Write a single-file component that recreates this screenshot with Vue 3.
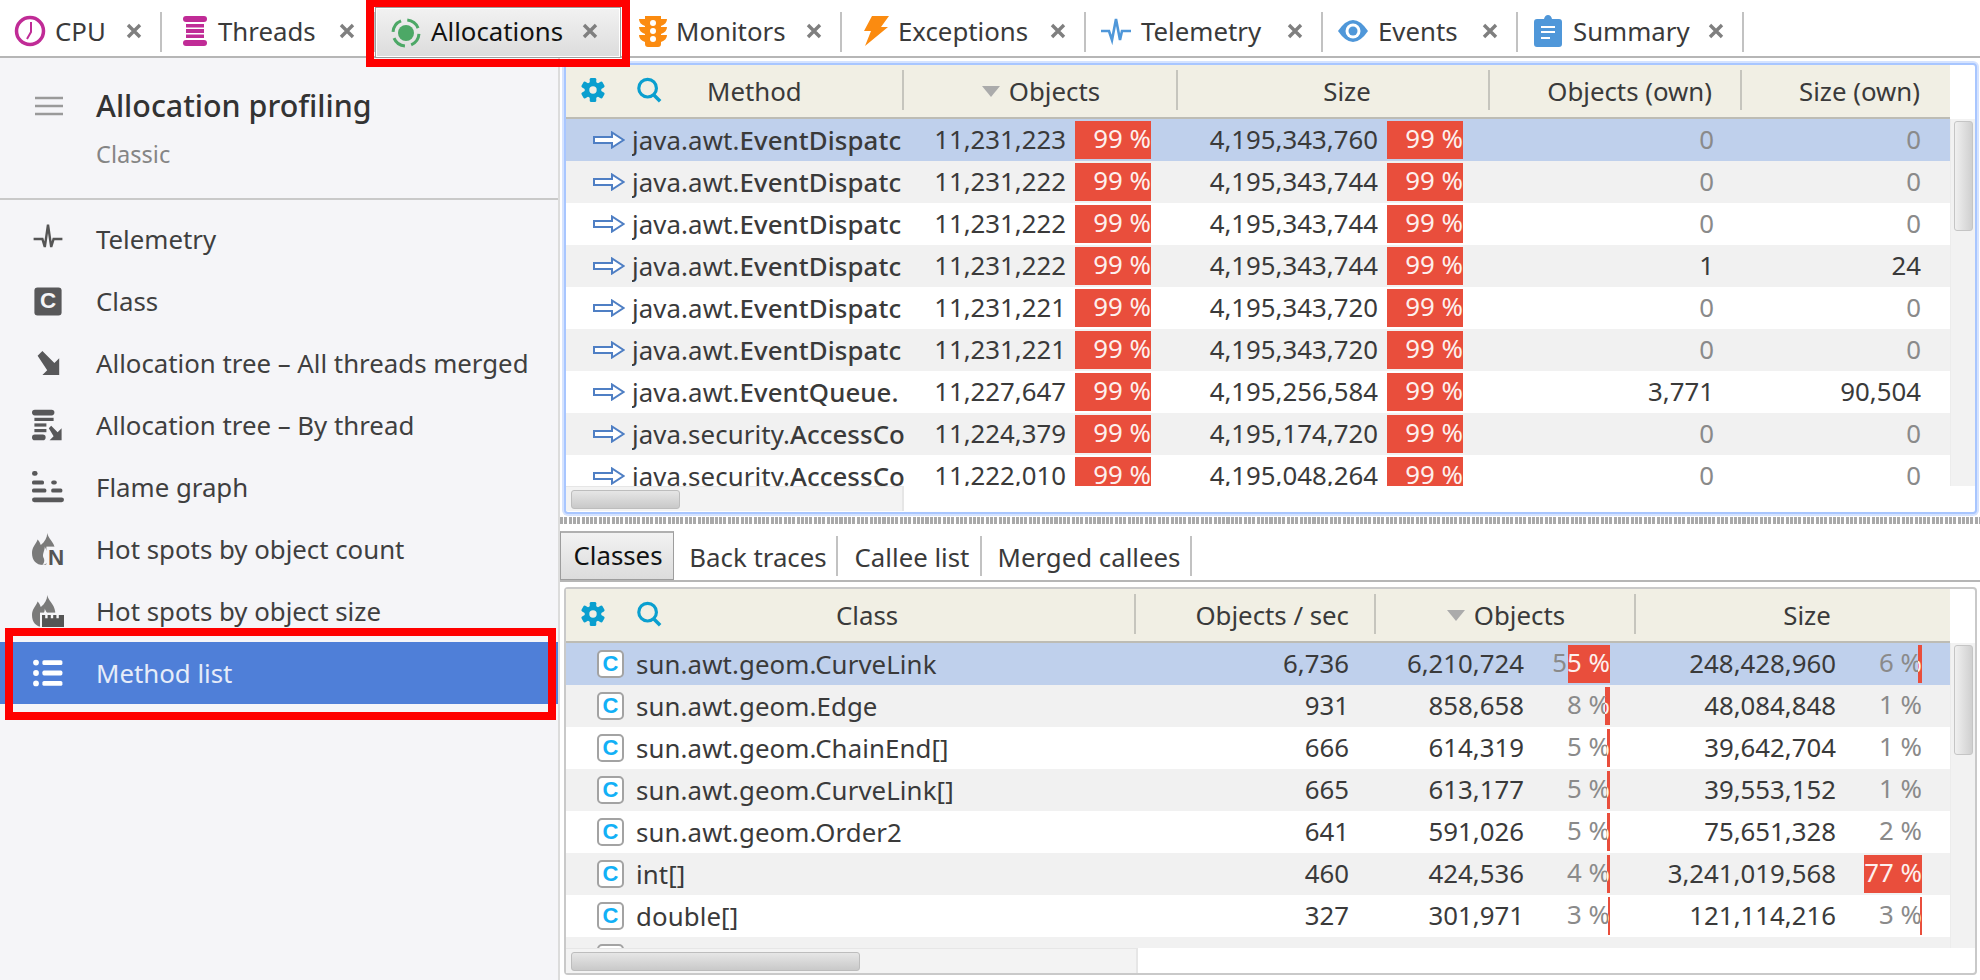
<script setup>
const tabs = [
  { id: 'cpu', label: 'CPU', w: 162 },
  { id: 'threads', label: 'Threads', w: 213 },
  { id: 'alloc', label: 'Allocations', w: 246, active: true },
  { id: 'mon', label: 'Monitors', w: 221 },
  { id: 'exc', label: 'Exceptions', w: 244 },
  { id: 'tel', label: 'Telemetry', w: 237 },
  { id: 'evt', label: 'Events', w: 195 },
  { id: 'sum', label: 'Summary', w: 226 }
]
const nav = [
  { id: 'tel', label: 'Telemetry' },
  { id: 'cls', label: 'Class' },
  { id: 'tree', label: 'Allocation tree – All threads merged' },
  { id: 'thr', label: 'Allocation tree – By thread' },
  { id: 'flame', label: 'Flame graph' },
  { id: 'hotn', label: 'Hot spots by object count' },
  { id: 'hots', label: 'Hot spots by object size' },
  { id: 'list', label: 'Method list', active: true }
]
const top = [
  ['java.awt.', 'EventDispatc', '11,231,223', '4,195,343,760', '0', '0'],
  ['java.awt.', 'EventDispatc', '11,231,222', '4,195,343,744', '0', '0'],
  ['java.awt.', 'EventDispatc', '11,231,222', '4,195,343,744', '0', '0'],
  ['java.awt.', 'EventDispatc', '11,231,222', '4,195,343,744', '1', '24'],
  ['java.awt.', 'EventDispatc', '11,231,221', '4,195,343,720', '0', '0'],
  ['java.awt.', 'EventDispatc', '11,231,221', '4,195,343,720', '0', '0'],
  ['java.awt.', 'EventQueue.', '11,227,647', '4,195,256,584', '3,771', '90,504'],
  ['java.security.', 'AccessCo', '11,224,379', '4,195,174,720', '0', '0'],
  ['java.security.', 'AccessCo', '11,222,010', '4,195,048,264', '0', '0']
]
const bottom = [
  ['sun.awt.geom.CurveLink', '6,736', '6,210,724', '55 %', 42, '248,428,960', '6 %', 4],
  ['sun.awt.geom.Edge', '931', '858,658', '8 %', 5, '48,084,848', '1 %', 0],
  ['sun.awt.geom.ChainEnd[]', '666', '614,319', '5 %', 3, '39,642,704', '1 %', 0],
  ['sun.awt.geom.CurveLink[]', '665', '613,177', '5 %', 3, '39,553,152', '1 %', 0],
  ['sun.awt.geom.Order2', '641', '591,026', '5 %', 3, '75,651,328', '2 %', 0],
  ['int[]', '460', '424,536', '4 %', 3, '3,241,019,568', '77 %', 58],
  ['double[]', '327', '301,971', '3 %', 2, '121,114,216', '3 %', 2],
  ['sun.awt.geom.Crossings', '230', '212,345', '2 %', 0, '8,493,800', '0 %', 0]
]
const subtabs = ['Classes', 'Back traces', 'Callee list', 'Merged callees']
</script>

<template>
  <div class="app">
    <header class="tabbar">
      <div v-for="t in tabs" :key="t.id" class="tab" :class="{ active: t.active }" :style="{ width: t.w + 'px' }">
        <svg class="tabicon" :class="'ti-' + t.id" viewBox="0 0 32 32">
          <template v-if="t.id === 'cpu'">
            <circle cx="16" cy="16" r="13.5" fill="none" stroke="#c02b96" stroke-width="3.5" />
            <path d="M17 7v10l-4 7" fill="none" stroke="#c02b96" stroke-width="2" />
          </template>
          <template v-else-if="t.id === 'threads'">
            <g fill="#c02b96">
              <rect x="4" y="1" width="24" height="6" rx="3" />
              <rect x="7" y="9" width="18" height="3.5" />
              <rect x="7" y="14" width="18" height="4" />
              <rect x="7" y="19.5" width="18" height="3.5" />
              <rect x="4" y="25" width="24" height="6" rx="3" />
            </g>
          </template>
          <template v-else-if="t.id === 'alloc'">
            <circle cx="16" cy="16" r="8" fill="#4ca866" />
            <circle cx="16" cy="16" r="13" fill="none" stroke="#4ca866" stroke-width="3" stroke-dasharray="14 6.4" stroke-dashoffset="-1" />
          </template>
          <template v-else-if="t.id === 'mon'">
            <path d="M8 1h16v3h6q0 5-6 7v1h6q0 5-6 7v1h6q0 5-6 7v2a3 3 0 0 1-3 3H11a3 3 0 0 1-3-3v-2q-6-2-6-7h6v-1q-6-2-6-7h6v-1Q2 9 2 4h6z" fill="#fb8b10" />
            <g fill="#fff"><circle cx="16" cy="8" r="3" /><circle cx="16" cy="16" r="3" /><circle cx="16" cy="24" r="3" /></g>
          </template>
          <template v-else-if="t.id === 'exc'">
            <path d="M12 1h17l-8 11h7L5 31l6-15H4z" fill="#fb8b10" />
          </template>
          <template v-else-if="t.id === 'tel'">
            <path d="M1 16h8l3 9 4-21 4 21 2-9h9" fill="none" stroke="#4f97d9" stroke-width="2.6" />
          </template>
          <template v-else-if="t.id === 'evt'">
            <path d="M1 16Q16-6 31 16 16 38 1 16z" fill="#4f97d9" />
            <circle cx="16" cy="16" r="7.5" fill="#fff" />
            <circle cx="16" cy="16" r="4.5" fill="#4f97d9" />
          </template>
          <template v-else>
            <path d="M5 4h7q1-4 4-4t4 4h7q3 0 3 3v22q0 3-3 3H5q-3 0-3-3V7q0-3 3-3z" fill="#4f97d9" />
            <g fill="#fff"><rect x="9" y="11" width="14" height="2" /><rect x="9" y="16" width="14" height="2" /><rect x="9" y="22" width="9" height="2" /></g>
          </template>
        </svg>
        <span class="tablabel">{{ t.label }}</span>
        <span class="tabclose"><svg viewBox="0 0 16 16"><path d="M2 2l12 12M14 2L2 14" stroke="#7f7f7f" stroke-width="3.4" /></svg></span>
      </div>
    </header>

    <div class="main">
      <aside class="sidebar">
        <div class="sidehead">
          <svg class="burger" viewBox="0 0 28 20"><path d="M0 2h28M0 10h28M0 18h28" stroke="#9a9a9a" stroke-width="2.6" /></svg>
          <div>
            <div class="title">Allocation profiling</div>
            <div class="subtitle">Classic</div>
          </div>
        </div>
        <nav class="nav">
          <div v-for="n in nav" :key="n.id" class="navitem" :class="{ active: n.active }">
            <svg class="navicon" viewBox="0 0 40 40">
              <path v-if="n.id === 'tel'" d="M2 20h11l3 10 4-28 4 28 3-10h11" fill="none" stroke="#555" stroke-width="3" />
              <template v-else-if="n.id === 'cls'">
                <rect x="3" y="3" width="34" height="35" rx="4" fill="#58585a" />
                <text x="20" y="29" text-anchor="middle" class="ctext">C</text>
              </template>
              <path v-else-if="n.id === 'tree'" d="M7 11l6-6 15 15 6-6v21H13l6-6z" fill="#58585a" />
              <template v-else-if="n.id === 'thr'">
                <g fill="#58585a">
                  <rect x="0" y="1" width="28" height="7" rx="3.5" />
                  <rect x="3" y="11" width="24" height="4" />
                  <rect x="3" y="18" width="15" height="4" />
                  <rect x="3" y="25" width="15" height="4" />
                  <rect x="0" y="32" width="17" height="7" rx="3.5" />
                  <path d="M21 24l3-3 8 8 5-5v15H22l5-5z" />
                </g>
              </template>
              <template v-else-if="n.id === 'flame'">
                <g fill="#58585a">
                  <rect x="0" y="0" width="7" height="6" rx="3" />
                  <rect x="0" y="12" width="15" height="5" rx="2" /><rect x="24" y="12" width="7" height="5" rx="2.5" />
                  <rect x="0" y="22" width="18" height="5" rx="2" /><rect x="24" y="22" width="14" height="5" rx="2" />
                  <rect x="0" y="33" width="40" height="6" rx="3" />
                </g>
              </template>
              <template v-else-if="n.id === 'hotn' || n.id === 'hots'">
                <path d="M19 0c1 7 9 11 10 21 1 11-6 19-15 19S0 34 0 25c0-8 5-11 7-17 2 2 3 4 4 7 5-4 8-9 8-15z" fill="#7a7a7a" />
                <path d="M16 17c1 4 5 7 5 13 0 5-3 10-8 10 3-3 3-7 1-10-1-4 2-8 2-13z" fill="#f5f5f8" />
                <template v-if="n.id === 'hotn'">
                  <rect x="18" y="17" width="22" height="23" fill="#f5f5f8" />
                  <text x="30" y="40" text-anchor="middle" class="ntext">N</text>
                </template>
                <template v-else>
                  <rect x="10" y="22" width="30" height="18" fill="#f5f5f8" />
                  <path d="M12.500 25h4v4h3v-4h4v4h3v-4h4v4h3v-4h6.500v15H12.500z" fill="#555" />
                </template>
              </template>
              <g v-else fill="#fff">
                <circle cx="5" cy="7" r="3.6" /><circle cx="5" cy="20" r="3.6" /><circle cx="5" cy="33" r="3.6" />
                <rect x="13" y="4" width="25" height="6" rx="2" /><rect x="13" y="17" width="25" height="6" rx="2" /><rect x="13" y="30" width="25" height="6" rx="2" />
              </g>
            </svg>
            <span>{{ n.label }}</span>
          </div>
        </nav>
      </aside>

      <section class="content">
        <div class="frame topframe focus">
          <div class="thead">
            <div class="hc tm method">
              <svg class="hicon" viewBox="0 0 28 28"><g fill="#0a9fcf"><rect x="10.5" y="1" width="7" height="26" rx="1.5" /><rect x="10.5" y="1" width="7" height="26" rx="1.5" transform="rotate(60 14 14)" /><rect x="10.5" y="1" width="7" height="26" rx="1.5" transform="rotate(120 14 14)" /><circle cx="14" cy="14" r="9" /></g><circle cx="14" cy="14" r="4" fill="#f1efe4" /></svg>
              <svg class="hicon search" viewBox="0 0 28 28"><circle cx="12.5" cy="12" r="9.5" fill="none" stroke="#0a9fcf" stroke-width="3.4" /><path d="M19 19l7 7" stroke="#0a9fcf" stroke-width="3.8" /></svg>
              <span class="hl hl-method">Method</span>
            </div>
            <div class="hc tn center"><i class="sort"></i>Objects</div>
            <div class="hc ts center sizeh">Size</div>
            <div class="hc to right">Objects (own)</div>
            <div class="hc tz right nosep">Size (own)</div>
          </div>
          <div class="tbody">
            <div class="rows">
              <div v-for="(r, i) in top" :key="i" class="row" :class="{ sel: i === 0 }">
                <div class="c tm name">
                  <svg class="arrow" viewBox="0 0 32 18"><path d="M1 6h18V1.500L30.500 9 19 16.500V12H1z" fill="#fff" stroke="#4f7fc4" stroke-width="2" /></svg>
                  <span class="clip">{{ r[0] }}<b>{{ r[1] }}</b></span>
                </div>
                <div class="c tn num">{{ r[2] }}<span class="pct"><span>99 %</span><span class="bar full"><span>99 %</span></span></span></div>
                <div class="c ts num">{{ r[3] }}<span class="pct"><span>99 %</span><span class="bar full"><span>99 %</span></span></span></div>
                <div class="c to num" :class="{ dim: r[4] === '0' }">{{ r[4] }}</div>
                <div class="c tz num" :class="{ dim: r[5] === '0' }">{{ r[5] }}</div>
              </div>
            </div>
            <div class="vscroll"><div class="vthumb"></div></div>
          </div>
          <div class="hscroll hs-top"><div class="hthumb ht-top"></div></div>
        </div>

        <div class="splitter"></div>

        <div class="subtabs">
          <div v-for="(s, i) in subtabs" :key="s" class="subtab" :class="['st' + i, { active: i === 0 }]">{{ s }}</div>
        </div>

        <div class="frame botframe">
          <div class="thead">
            <div class="hc bc method">
              <svg class="hicon" viewBox="0 0 28 28"><g fill="#0a9fcf"><rect x="10.5" y="1" width="7" height="26" rx="1.5" /><rect x="10.5" y="1" width="7" height="26" rx="1.5" transform="rotate(60 14 14)" /><rect x="10.5" y="1" width="7" height="26" rx="1.5" transform="rotate(120 14 14)" /><circle cx="14" cy="14" r="9" /></g><circle cx="14" cy="14" r="4" fill="#f1efe4" /></svg>
              <svg class="hicon search" viewBox="0 0 28 28"><circle cx="12.5" cy="12" r="9.5" fill="none" stroke="#0a9fcf" stroke-width="3.4" /><path d="M19 19l7 7" stroke="#0a9fcf" stroke-width="3.8" /></svg>
              <span class="hl hl-class">Class</span>
            </div>
            <div class="hc br right">Objects / sec</div>
            <div class="hc bn center"><i class="sort"></i>Objects</div>
            <div class="hc bs center nosep bsizeh">Size</div>
          </div>
          <div class="tbody">
            <div class="rows">
              <div v-for="(r, i) in bottom" :key="i" class="row" :class="{ sel: i === 0 }">
                <div class="c bc name">
                  <span class="cicon">C</span>
                  <span class="clip">{{ r[0] }}</span>
                </div>
                <div class="c br num">{{ r[1] }}</div>
                <div class="c bn num">{{ r[2] }}<span class="pct lite"><span>{{ r[3] }}</span><span v-if="r[4]" class="bar" :style="{ width: r[4] + 'px' }"><span>{{ r[3] }}</span></span></span></div>
                <div class="c bs num">{{ r[5] }}<span class="pct lite"><span>{{ r[6] }}</span><span v-if="r[7]" class="bar" :style="{ width: r[7] + 'px' }"><span>{{ r[6] }}</span></span></span></div>
              </div>
            </div>
            <div class="vscroll"><div class="vthumb vt-bot"></div></div>
          </div>
          <div class="hscroll hs-bot"><div class="hthumb ht-bot"></div></div>
        </div>
      </section>
    </div>

    <div class="mark mark-tab"></div>
    <div class="mark mark-nav"></div>
  </div>
</template>

<style>
html, body { margin: 0; padding: 0; background: #fff; }
</style>

<style scoped>
.app {
  position: relative;
  width: 1980px;
  height: 980px;
  overflow: hidden;
  background: #fff;
  color: #3a3a3a;
  font-family: "Noto Sans", "Open Sans", sans-serif;
  font-size: 25.8px;
  display: flex;
  flex-direction: column;
}
.tabbar {
  height: 56px;
  flex: none;
  display: flex;
  border-bottom: 2px solid #b6b6b6;
  box-sizing: content-box;
}
.tab {
  position: relative;
  box-sizing: border-box;
  height: 56px;
  display: flex;
  align-items: center;
  flex: none;
  padding-left: 14px;
  padding-top: 6px;
}
.tab::after {
  content: "";
  position: absolute;
  right: 0;
  top: 12px;
  width: 2px;
  height: 40px;
  background: #c2c2c2;
}
.tab.active::after { display: none; }
.tab.active {
  height: 51px;
  margin-top: 7px;
  padding-left: 14px;
  padding-top: 0;
  color: #111;
  background: linear-gradient(#f2f2f2, #dcdcdc);
  border: 1px solid #9d9d9d;
  box-shadow: inset 0 0 0 1px #fff;
}
.tab.active .tablabel { margin-top: -3px; }
.tabicon { width: 32px; height: 32px; flex: none; margin-right: 9px; }
.ti-threads { margin-left: 3px; margin-right: 7px; }
.ti-mon { margin-left: 2px; margin-right: 7px; }
.ti-exc { margin-left: 4px; margin-right: 6px; }
.tablabel { white-space: nowrap; }
.tabclose {
  position: absolute;
  right: 20px;
  top: 23px;
  width: 16px;
  height: 16px;
}
.tabclose svg { display: block; width: 16px; height: 16px; }
.tab.active .tabclose { right: 22px; top: 15px; }

.main { flex: 1; display: flex; min-height: 0; }
.sidebar {
  width: 558px;
  flex: none;
  background: #f5f5f8;
  border-right: 2px solid #dcdcdc;
}
.sidehead {
  height: 142px;
  box-sizing: border-box;
  display: flex;
  padding: 27px 0 0 35px;
  border-bottom: 2px solid #c9c9c9;
}
.burger { width: 28px; height: 20px; margin: 11px 33px 0 0; flex: none; }
.title { font-size: 30.4px; line-height: 42px; color: #333; font-weight: 500; }
.subtitle { font-size: 23.6px; line-height: 30px; margin-top: 12px; color: #858585; }
.nav { padding-top: 8px; }
.navitem {
  height: 62px;
  display: flex;
  align-items: center;
  padding-left: 32px;
  color: #3f3f3f;
}
.navicon { width: 32px; height: 32px; flex: none; margin-right: 32px; }
.navitem.active { background: #4f7fd8; color: #e6ecf8; }
.ctext { font: 700 28px "Liberation Sans", sans-serif; fill: #f5f5f8; }
.ntext { font: 700 28px "Liberation Sans", sans-serif; fill: #555; }

.content { flex: 1; min-width: 0; display: flex; flex-direction: column; }
.frame {
  box-sizing: border-box;
  margin-left: 4px;
  width: 1413px;
  display: flex;
  flex-direction: column;
  flex: none;
  border-radius: 4px;
  background: #fff;
}
.focus { border: 2px solid #a8c6ff; box-shadow: 0 0 0 2px #d5e3ff; }
.topframe { margin-top: 5px; height: 451px; padding: 0 0 1px 0; }
.botframe { height: 388px; border: 2px solid #c9c9c9; margin-top: 5px; }
.thead {
  display: flex;
  height: 54px;
  flex: none;
  box-sizing: border-box;
  background: #f1efe4;
  border-bottom: 2px solid #bdbcb4;
  width: 1384px;
}
.hc {
  position: relative;
  display: flex;
  align-items: center;
  box-sizing: border-box;
  flex: none;
}
.hc::after {
  content: "";
  position: absolute;
  right: 0;
  top: 5px;
  width: 2px;
  height: 40px;
  background: #c6c5bd;
}
.hc.nosep::after { display: none; }
.hc.center { justify-content: center; }
.hc.right { justify-content: flex-end; }
.hicon { width: 26px; height: 26px; position: absolute; left: 14px; top: 12px; }
.hicon.search { left: 70px; }
.hl-method { padding-left: 141px; }
.hl-class { padding-left: 270px; }
.sizeh { padding-left: 26px; }
.bsizeh { padding-left: 28px; }
.sort {
  width: 0;
  height: 0;
  border: 9px solid transparent;
  border-top: 11px solid #ababab;
  border-bottom: 0;
  margin-right: 9px;
}
.tm { width: 338px; }
.tn { width: 274px; }
.ts { width: 312px; }
.to { width: 252px; padding-right: 30px; }
.tz { width: 208px; padding-right: 30px; }
.bc { width: 570px; }
.br { width: 240px; padding-right: 27px; }
.bn { width: 260px; }
.bs { width: 314px; }
.tbody { flex: 1; min-height: 0; display: flex; overflow: hidden; }
.rows { width: 1384px; flex: none; overflow: hidden; }
.row { display: flex; height: 42px; background: #fff; }
.row:nth-child(even) { background: #f1f1f1; }
.row.sel { background: #bfd0ec; }
.c {
  height: 42px;
  line-height: 41px;
  box-sizing: border-box;
  flex: none;
  white-space: nowrap;
}
.name { display: flex; align-items: center; overflow: hidden; }
.arrow { width: 32px; height: 18px; flex: none; margin: 0 7px 0 27px; }
.clip { overflow: hidden; letter-spacing: 0.1px; }
.clip b { font-weight: 500; }
.cicon {
  flex: none;
  box-sizing: border-box;
  width: 27px;
  height: 28px;
  margin: 0 12px 0 31px;
  border: 2px solid #a3a3a3;
  border-radius: 5px;
  background: #fff;
  color: #12b0f6;
  font: 700 22px/24px "Liberation Sans", sans-serif;
  text-align: center;
}
.num { display: flex; justify-content: flex-end; }
.tn.num { padding-right: 27px; }
.ts.num { padding-right: 27px; }
.bn.num { padding-right: 26px; }
.bs.num { padding-right: 28px; }
.to.num { padding-right: 28px; }
.tz.num { padding-right: 29px; }
.br.num { padding-right: 27px; }
.dim { color: #8a8a8a; }
.pct {
  position: relative;
  width: 76px;
  margin-left: 9px;
  flex: none;
  display: flex;
  justify-content: flex-end;
  line-height: 38px;
  height: 42px;
}
.pct.lite { color: #8a8a8a; margin-left: 10px; }
.bar {
  position: absolute;
  right: 0;
  top: 2px;
  height: 38px;
  overflow: hidden;
  display: flex;
  justify-content: flex-end;
  background: #e94e3c;
  color: #fdf0ee;
  line-height: 34px;
}
.bar.full { width: 76px; }
.vscroll {
  width: 25px;
  flex: none;
  background: #f2f2f2;
  border-left: 1px solid #ececec;
  box-sizing: border-box;
  padding: 2px 2px 0 3px;
}
.vthumb {
  height: 108px;
  border: 1px solid #c5c5c5;
  border-radius: 3px;
  background: linear-gradient(90deg, #f0f0f0, #cfcfcf);
}
.vt-bot { height: 108px; }
.hscroll {
  height: 25px;
  flex: none;
  box-sizing: border-box;
  background: #f3f3f3;
  border-top: 1px solid #e6e6e6;
  border-right: 2px solid #e6e6e6;
  padding: 3px 0 0 5px;
}
.hs-top { width: 338px; }
.hs-bot { width: 572px; }
.hthumb {
  height: 19px;
  border: 1px solid #bdbdbd;
  border-radius: 3px;
  box-sizing: border-box;
  background: linear-gradient(#e6e6e6, #c9c9c9);
}
.ht-top { width: 109px; }
.ht-bot { width: 289px; }
.splitter {
  height: 7px;
  flex: none;
  margin-top: 3px;
  background: repeating-linear-gradient(90deg, #a9a9a9 0 3px, #fff 3px 4.3px);
}
.subtabs {
  display: flex;
  height: 49px;
  flex: none;
  margin-top: 7px;
  box-sizing: content-box;
  border-bottom: 2px solid #b6b6b6;
}
.subtab {
  position: relative;
  box-sizing: border-box;
  display: flex;
  align-items: center;
  justify-content: center;
  flex: none;
  padding: 3px 0 0 4px;
}
.subtab::after {
  content: "";
  position: absolute;
  right: 0;
  top: 5px;
  width: 2px;
  height: 40px;
  background: #c2c2c2;
}
.subtab.active::after { display: none; }
.subtab.active {
  color: #111;
  background: linear-gradient(#f2f2f2, #dcdcdc);
  border: 1px solid #9d9d9d;
  border-top: 2px solid #b0b0b0;
  padding: 0 0 3px 2px;
}
.st0 { width: 114px; }
.st1 { width: 164px; }
.st2 { width: 144px; }
.st3 { width: 210px; }

.mark { position: absolute; box-sizing: border-box; border: 8px solid #ff0000; pointer-events: none; }
.mark-tab { left: 366px; top: -1px; width: 264px; height: 68px; }
.mark-nav { left: 5px; top: 628px; width: 551px; height: 92px; }
</style>
